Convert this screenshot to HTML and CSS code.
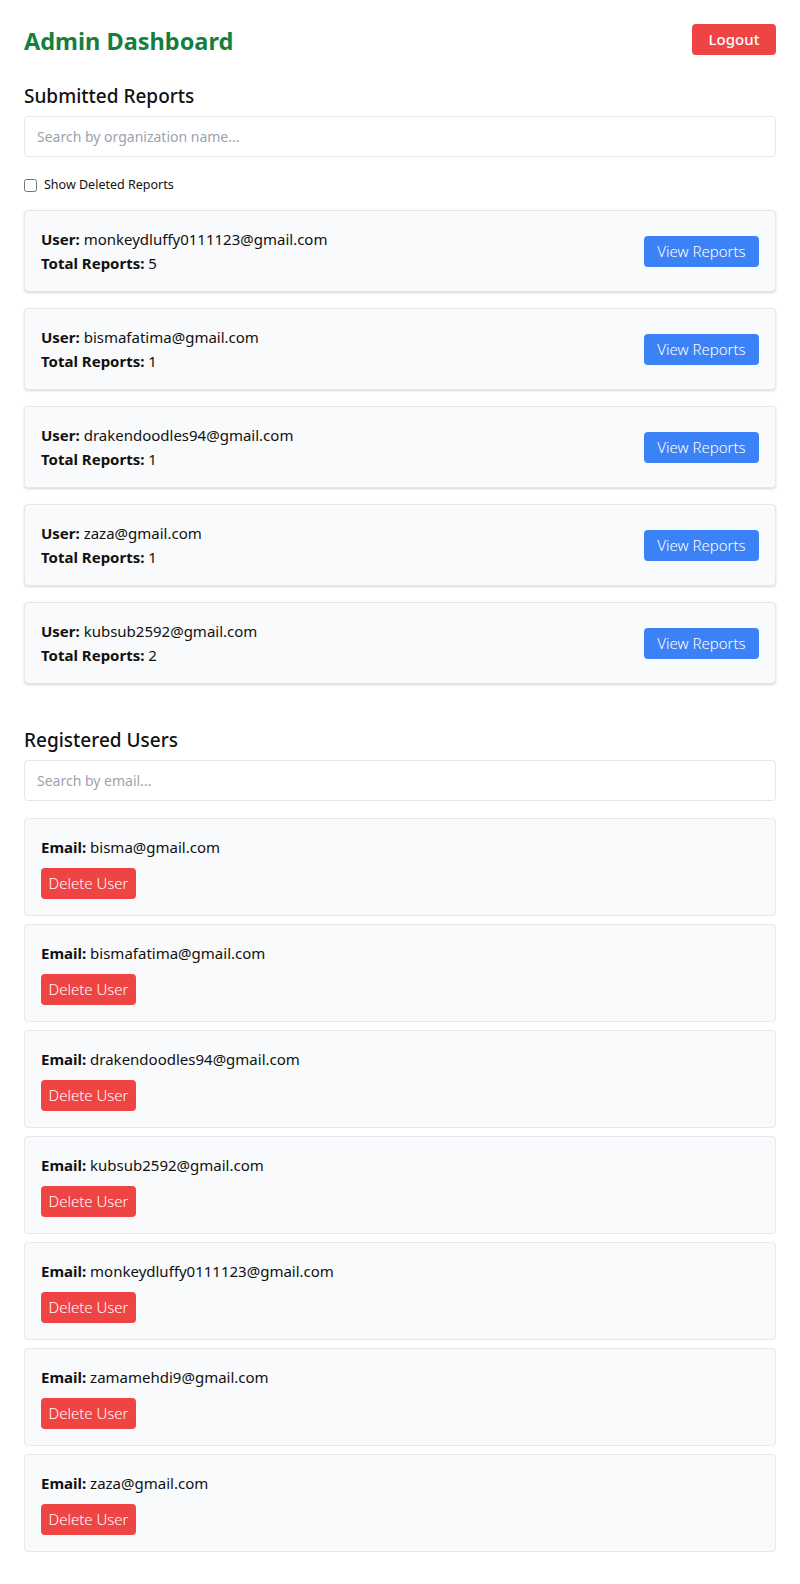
FILE: index.html
```html
<!DOCTYPE html>
<html lang="en">
<head>
<meta charset="utf-8">
<title>Admin Dashboard</title>
<link rel="stylesheet" href="styles.css">
</head>
<body>
<div class="page">
  <header class="topbar">
    <h1 class="title">Admin Dashboard</h1>
    <button class="btn btn-logout">Logout</button>
  </header>

  <section class="section">
    <h2 class="section-title">Submitted Reports</h2>
    <input class="search" type="text" placeholder="Search by organization name...">
    <label class="check-row"><input type="checkbox" class="check"> Show Deleted Reports</label>
    <div class="report-list">
      <div class="card report-card">
        <div class="info"><div><b>User:</b> monkeydluffy0111123@gmail.com</div><div><b>Total Reports:</b> 5</div></div>
        <button class="btn btn-view">View Reports</button>
      </div>
      <div class="card report-card">
        <div class="info"><div><b>User:</b> bismafatima@gmail.com</div><div><b>Total Reports:</b> 1</div></div>
        <button class="btn btn-view">View Reports</button>
      </div>
      <div class="card report-card">
        <div class="info"><div><b>User:</b> drakendoodles94@gmail.com</div><div><b>Total Reports:</b> 1</div></div>
        <button class="btn btn-view">View Reports</button>
      </div>
      <div class="card report-card">
        <div class="info"><div><b>User:</b> zaza@gmail.com</div><div><b>Total Reports:</b> 1</div></div>
        <button class="btn btn-view">View Reports</button>
      </div>
      <div class="card report-card">
        <div class="info"><div><b>User:</b> kubsub2592@gmail.com</div><div><b>Total Reports:</b> 2</div></div>
        <button class="btn btn-view">View Reports</button>
      </div>
    </div>
  </section>

  <section class="section users">
    <h2 class="section-title">Registered Users</h2>
    <input class="search search-users" type="text" placeholder="Search by email...">
    <div class="user-list">
      <div class="card user-card"><div><b>Email:</b> bisma@gmail.com</div><button class="btn btn-delete">Delete User</button></div>
      <div class="card user-card"><div><b>Email:</b> bismafatima@gmail.com</div><button class="btn btn-delete">Delete User</button></div>
      <div class="card user-card"><div><b>Email:</b> drakendoodles94@gmail.com</div><button class="btn btn-delete">Delete User</button></div>
      <div class="card user-card"><div><b>Email:</b> kubsub2592@gmail.com</div><button class="btn btn-delete">Delete User</button></div>
      <div class="card user-card"><div><b>Email:</b> monkeydluffy0111123@gmail.com</div><button class="btn btn-delete">Delete User</button></div>
      <div class="card user-card"><div><b>Email:</b> zamamehdi9@gmail.com</div><button class="btn btn-delete">Delete User</button></div>
      <div class="card user-card"><div><b>Email:</b> zaza@gmail.com</div><button class="btn btn-delete">Delete User</button></div>
    </div>
  </section>
</div>
</body>
</html>
```
FILE: styles.css
```css
* { box-sizing: border-box; }
html, body { margin: 0; padding: 0; background: #fff; }
body {
  font-family: "Noto Sans", "Open Sans", sans-serif;
  color: #111;
  font-size: 15px;
  line-height: 24px;
}
.page { padding: 24px; }
.topbar {
  display: flex;
  justify-content: space-between;
  align-items: center;
  height: 31px;
}
.title {
  margin: 0;
  font-size: 23.5px;
  font-weight: 700;
  color: #15803d;
  line-height: 32px;
  margin-top: 2px;
}
.btn {
  font-family: inherit;
  border: none;
  border-radius: 4px;
  color: #fff;
  cursor: pointer;
  height: 31px;
  padding: 0 12px;
  font-size: 15px;
  line-height: 31px;
  white-space: nowrap;
}
.btn-logout {
  background: #ef4444;
  width: 84px;
  font-weight: 500;
}
.section-title {
  margin: 0;
  font-size: 19px;
  font-weight: 500;
  line-height: 28px;
}
.section { display: flex; flex-direction: column; }
.section:first-of-type { margin-top: 27px; }
.search {
  margin-top: 6px;
  height: 41px;
  width: 100%;
  border: 1px solid #e5e7eb;
  border-radius: 4px;
  padding: 0 12px;
  font-family: inherit;
  font-size: 14px;
  color: #111;
  outline: none;
}
.search::placeholder { color: #9ca3af; }
.check-row {
  display: flex;
  align-items: center;
  gap: 7px;
  font-size: 12.5px;
  margin-top: 16px;
  line-height: 24px;
  color: #111;
}
.check {
  margin: 0;
  width: 13px;
  height: 13px;
}
.report-list {
  display: flex;
  flex-direction: column;
  gap: 16px;
  margin-top: 13px;
}
.card {
  background: #f9fafb;
  border: 1px solid #e5e7eb;
  border-radius: 4px;
  padding: 16px;
}
.report-card {
  display: flex;
  justify-content: space-between;
  align-items: center;
  box-shadow: 0 1px 3px rgba(0,0,0,0.1), 0 1px 2px rgba(0,0,0,0.06);
}
.btn-view {
  background: #3b82f6;
  width: 115px;
  flex-shrink: 0;
  padding: 0;
  font-weight: 300;
}
.users { margin-top: 42px; }
.search-users { margin-top: 6px; }
.user-list {
  display: flex;
  flex-direction: column;
  gap: 8px;
  margin-top: 17px;
}
.user-card {
  display: flex;
  flex-direction: column;
  align-items: flex-start;
  gap: 9px;
}
.btn-delete {
  background: #ef4444;
  width: 95px;
  padding: 0;
  font-weight: 300;
}
b { font-weight: 700; }
```
